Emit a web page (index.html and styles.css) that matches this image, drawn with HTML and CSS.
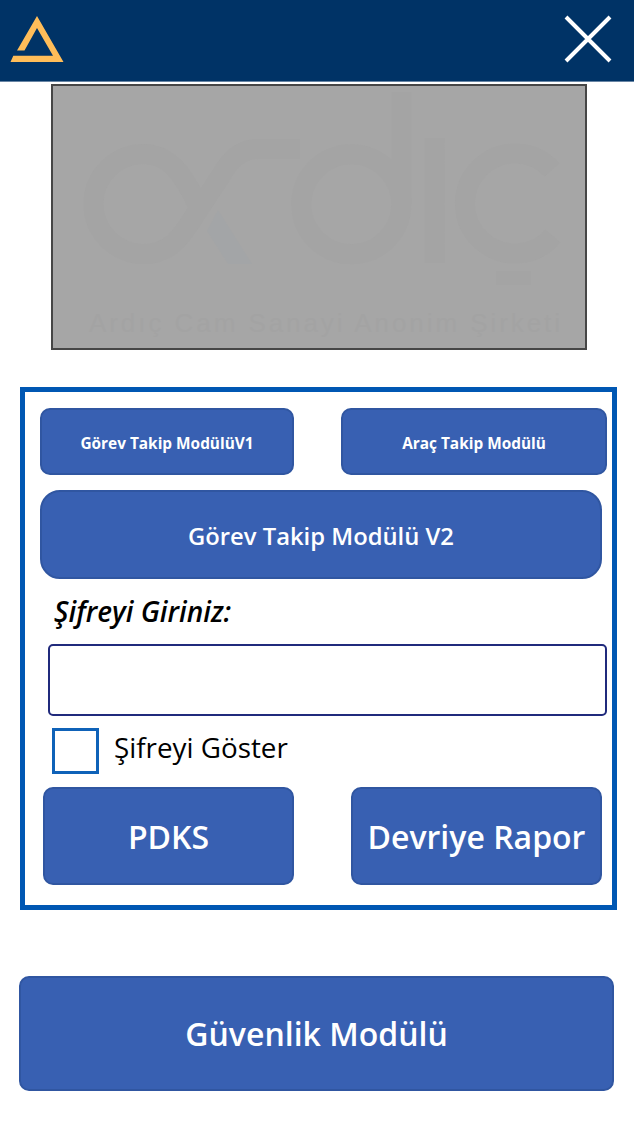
FILE: index.html
```html
<!DOCTYPE html>
<html lang="tr">
<head>
<meta charset="utf-8">
<title>Ardıç Cam</title>
<link rel="stylesheet" href="styles.css">
</head>
<body>
<header class="topbar">
  <svg class="brand" width="56" height="50" viewBox="0 0 56 50" aria-hidden="true">
    <path d="M7 34.500 27 0 53.500 46H.5L3.300 39.700H43L27 12 14.500 34.500Z" />
  </svg>
  <svg class="close" width="48" height="48" viewBox="0 0 48 48" aria-hidden="true">
    <path d="M2 2 46 46M46 2 2 46" />
  </svg>
</header>
<main class="screen">
  <div class="logo">
    <svg width="532" height="262" viewBox="53 86 532 262">
      <g class="mark">
        <path d="M197 204C183 172 167 154 143.500 154A50 50 0 0 0 143.500 254C171 254 181 237 197 212L222 174Q236 149 258 149H300" />
        <circle cx="351.300" cy="204.300" r="50" />
        <path d="M401.500 92V204M434.700 138V263M552 170A50 50 0 1 0 553 236" />
        <path class="cedilla" d="M496 278H531" />
      </g>
      <path class="accent" d="M218 210 252 264H228L207 231Z" />
      <text class="tagline" x="89" y="332" textLength="471">Ardıç Cam Sanayi Anonim Şirketi</text>
    </svg>
  </div>
  <section class="panel">
    <div class="row modules">
      <button class="btn small v1">Görev Takip ModülüV1</button>
      <button class="btn small vehicle">Araç Takip Modülü</button>
    </div>
    <button class="btn v2">Görev Takip Modülü V2</button>
    <label class="prompt" for="password">Şifreyi Giriniz:</label>
    <input class="field" id="password" type="password">
    <label class="reveal"><input class="check" type="checkbox"><span>Şifreyi Göster</span></label>
    <div class="row actions">
      <button class="btn large">PDKS</button>
      <button class="btn large">Devriye Rapor</button>
    </div>
  </section>
  <button class="btn security">Güvenlik Modülü</button>
</main>
</body>
</html>
```

FILE: styles.css
```css
* { box-sizing: border-box; }
body {
  margin: 0;
  height: 1125px;
  overflow: hidden;
  background: #fff;
  color: #000;
  font-family: "Open Sans", sans-serif;
}
.topbar {
  display: flex;
  justify-content: space-between;
  align-items: flex-start;
  height: 82px;
  padding: 9px 22px 0 10px;
  background: #003366;
  border-bottom: 1px solid #6885a4;
}
.brand { display: block; margin-top: 7px; }
.brand path { fill: #ffbd59; }
.close { margin-top: 6px; }
.close path { stroke: #fff; stroke-width: 4; fill: none; }
.screen { display: flex; flex-direction: column; }
.logo {
  width: 536px;
  height: 266px;
  margin: 2px 0 0 51px;
  border: 2px solid #464646;
  background: #a6a6a6;
}
.logo svg { display: block; }
.mark { fill: none; stroke: #a4a4a4; stroke-width: 20; }
.cedilla { stroke-width: 14; }
.accent { fill: #a3a5a7; }
.tagline { font: 26px "Liberation Sans", sans-serif; fill: #a3a3a3; }
.panel {
  display: flex;
  flex-direction: column;
  width: 597px;
  height: 523px;
  margin: 37px 0 0 20px;
  padding: 16px 5px 0 15px;
  border: 5px solid #0057b3;
}
.row { display: flex; justify-content: space-between; }
.btn {
  display: block;
  padding: 0;
  border: 2px solid #3056a1;
  border-radius: 10px;
  background: #3860b2;
  color: #fff;
  font-family: inherit;
  font-weight: 600;
  text-align: center;
  white-space: nowrap;
}
.small { height: 67px; padding-top: 3px; font-size: 15.400px; font-weight: 700; }
.v1 { width: 254px; }
.vehicle { width: 266px; }
.v2 {
  width: 562px;
  height: 89px;
  margin: 15px 0 0;
  padding-top: 2px;
  border-radius: 20px;
  font-size: 23.800px;
  font-weight: 630;
}
.prompt {
  height: 65px;
  padding: 13px 0 0 14px;
  font-size: 28px;
  font-style: italic;
  font-weight: 600;
  line-height: 38px;
}
.field {
  width: 559px;
  height: 72px;
  margin: 0 0 0 8px;
  border: 2px solid #202a7c;
  border-radius: 5px;
  background: #fff;
}
.reveal {
  display: flex;
  margin: 12px 0 0 12px;
  font-size: 27.800px;
  font-weight: 370;
  line-height: 38px;
}
.check {
  appearance: none;
  width: 47px;
  height: 46px;
  margin: 0 15px 0 0;
  border: 3px solid #0f62b8;
}
.actions { margin: 13px 5px 0 3px; }
.large { width: 251px; height: 98px; padding-top: 1px; font-size: 32px; }
.security {
  width: 595px;
  height: 115px;
  margin: 66px 0 0 19px;
  font-size: 32px;
}
```
